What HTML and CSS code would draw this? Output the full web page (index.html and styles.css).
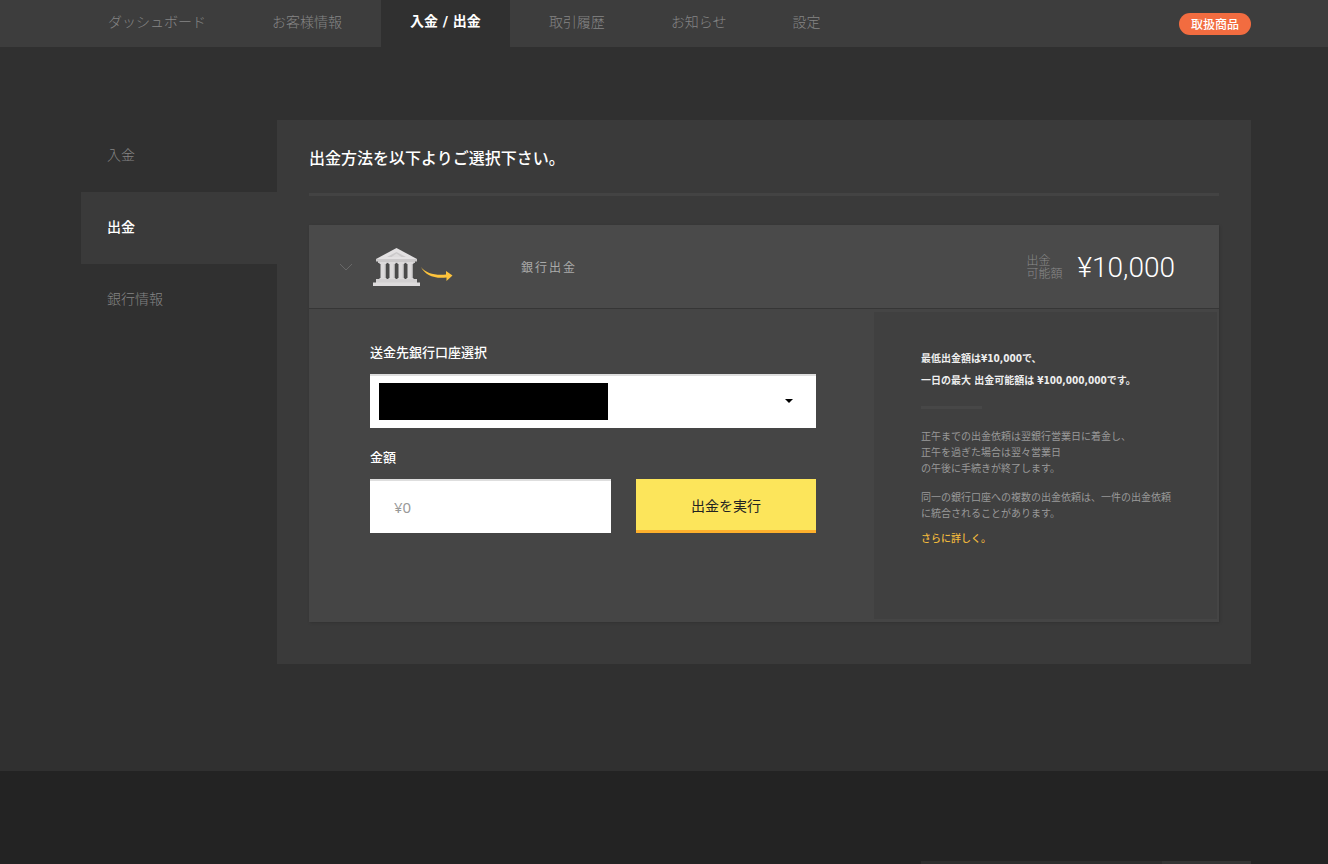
FILE: index.html
```html
<!DOCTYPE html>
<html lang="ja">
<head>
<meta charset="utf-8">
<meta name="viewport" content="width=device-width, initial-scale=1">
<title>入金 / 出金</title>
<link rel="stylesheet" href="styles.css">
</head>
<body>
<header class="topbar">
  <nav class="topnav">
    <a class="topnav-item" href="#">ダッシュボード</a>
    <a class="topnav-item" href="#">お客様情報</a>
    <a class="topnav-item is-active" href="#">入金 / 出金</a>
    <a class="topnav-item" href="#">取引履歴</a>
    <a class="topnav-item" href="#">お知らせ</a>
    <a class="topnav-item" href="#">設定</a>
  </nav>
  <a class="pill" href="#">取扱商品</a>
</header>

<main class="main">
  <nav class="sidebar">
    <a class="side-item" href="#">入金</a>
    <a class="side-item is-active" href="#">出金</a>
    <a class="side-item" href="#">銀行情報</a>
  </nav>

  <section class="panel">
    <h1 class="panel-title">出金方法を以下よりご選択下さい。</h1>

    <article class="card">
      <header class="card-head">
        <svg class="chevron" width="14" height="8" viewBox="0 0 14 8" aria-hidden="true"><path d="M1 1l6 6 6-6" fill="none" stroke="#686868"/></svg>
        <svg class="bank" width="80" height="40" viewBox="0 0 80 40" aria-hidden="true">
          <path d="M23.500 1L44 12H3z" fill="#e3e1e2"/>
          <path d="M23.500 5L33 10H14z" fill="#cbc9ca"/>
          <path d="M23.500 6.500l5 3.500h-10z" fill="#dedcdd"/>
          <path d="M3 12h41v2.500h-2V16H5v-1.500H3z" fill="#cbc9ca"/>
          <path d="M6.500 15h7v2h-1v14h1v1.500h-7V31h1V17h-1zM15.500 15h7v2h-1v14h1v1.500h-7V31h1V17h-1zM24.500 15h7v2h-1v14h1v1.500h-7V31h1V17h-1zM33.500 15h7v2h-1v14h1v1.500h-7V31h1V17h-1z" fill="#dcdadb"/>
          <path d="M11.500 17h1v14h-1zM20.500 17h1v14h-1zM29.500 17h1v14h-1zM38.500 17h1v14h-1z" fill="#cac8c9"/>
          <path d="M3 32h41v4H3z" fill="#d2d0d1"/>
          <path d="M0 35.500h47V39H0z" fill="#dddbdc"/>
          <path d="M48 20c5 6.500 14 8.500 25 7.500V24l6.500 4.500L73.500 34v-3.500C61 32 52 28 48 20z" fill="#fdc33c"/>
        </svg>
        <h2 class="card-title">銀行出金</h2>
        <div class="limit">
          <span class="limit-label">出金<br>可能額</span>
          <strong class="limit-value">¥10,000</strong>
        </div>
      </header>

      <div class="card-body">
        <form class="form">
          <label class="label" for="bank">送金先銀行口座選択</label>
          <div class="select-wrap">
            <select class="field select" id="bank"><option></option></select>
            <span class="mask"></span>
            <svg class="caret" width="8" height="4" viewBox="0 0 8 4" aria-hidden="true"><path d="M0 0h8L4 4z"/></svg>
          </div>
          <label class="label label-amount" for="amount">金額</label>
          <div class="row">
            <input class="field amount" id="amount" type="text" placeholder="¥0">
            <button class="submit" type="submit">出金を実行</button>
          </div>
        </form>

        <aside class="notes">
          <p class="notes-strong">最低出金額は¥10,000で、<br>一日の最大 出金可能額は ¥100,000,000です。</p>
          <hr class="notes-rule">
          <p class="notes-text">正午までの出金依頼は翌銀行営業日に着金し、<br>正午を過ぎた場合は翌々営業日<br>の午後に手続きが終了します。</p>
          <p class="notes-text">同一の銀行口座への複数の出金依頼は、一件の出金依頼<br>に統合されることがあります。</p>
          <a class="notes-link" href="#">さらに詳しく。</a>
        </aside>
      </div>
    </article>
  </section>
</main>

<footer class="footer">
  <div class="footer-bar"><span class="footer-bar-end"></span></div>
</footer>
</body>
</html>
```
FILE: styles.css
```css
* {
  box-sizing: border-box;
}

body {
  margin: 0;
  background: #232323;
  color: #fff;
  font-family: "Noto Sans CJK JP", sans-serif;
  font-size: 14px;
}

a {
  text-decoration: none;
}

h1, h2, p {
  margin: 0;
}

/* Top navigation */
.topbar {
  display: flex;
  justify-content: space-between;
  align-items: flex-start;
  padding: 0 77px 0 81px;
  background: #3d3d3d;
}

.topnav {
  display: flex;
  gap: 12px;
}

.topnav-item {
  padding: 0 27px 5px;
  line-height: 42px;
  font-weight: 300;
  color: #858585;
  white-space: nowrap;
}

.topnav-item.is-active {
  padding: 0 29px 5px;
  background: #303030;
  color: #fff;
  font-family: "DejaVu Sans", "Noto Sans CJK JP", sans-serif;
  font-weight: 700;
}

.pill {
  margin-top: 13px;
  padding: 0 12px 1px;
  border-radius: 11px;
  background: #f26c40;
  color: #fff;
  font-size: 12px;
  font-weight: 500;
  line-height: 21px;
}

/* Page body */
.main {
  display: flex;
  align-items: flex-start;
  padding: 73px 77px 107px 81px;
  background: #303030;
}

.sidebar {
  display: flex;
  flex-direction: column;
  flex: 0 0 196px;
}

.side-item {
  padding: 0 26px 4px;
  line-height: 68px;
  font-weight: 300;
  color: #858585;
}

.side-item.is-active {
  background: #3a3a3a;
  color: #fff;
  font-weight: 500;
}

.panel {
  flex: 1;
  padding: 26px 32px 42px;
  background: #3a3a3a;
}

.panel-title {
  padding-bottom: 25px;
  border-bottom: 3px solid #434343;
  font-size: 16px;
  font-weight: 500;
  line-height: 22px;
}

/* Withdrawal method card */
.card {
  margin-top: 29px;
  background: #454545;
  box-shadow: 1px 1px 2px #333;
}

.card-head {
  display: flex;
  align-items: center;
  height: 84px;
  padding: 0 44px 0 30px;
  border-bottom: 1px solid #363636;
  background: #4a4a4a;
}

.bank {
  margin-left: 20px;
}

.card-title {
  margin-left: 68px;
  color: #aaa;
  font-size: 12px;
  font-weight: 400;
  letter-spacing: 2px;
}

.limit {
  display: flex;
  align-items: center;
  gap: 15px;
  margin-left: auto;
  padding-top: 2px;
}

.limit-label {
  padding-bottom: 4px;
  color: #8a8a8a;
  font-size: 12px;
  font-weight: 300;
  line-height: 13px;
}

.limit-value {
  font-family: Roboto, sans-serif;
  font-size: 28px;
  font-weight: 300;
}

.card-body {
  display: flex;
}

.form {
  flex: 1;
  padding: 33px 58px 33px 61px;
}

.label {
  display: block;
  margin-bottom: 12px;
  font-size: 13px;
  font-weight: 500;
  line-height: 20px;
}

.label-amount {
  margin-top: 19px;
}

.field {
  display: block;
  width: 100%;
  height: 54px;
  padding: 0 24px;
  border: 0;
  border-top: 2px solid #dedede;
  border-radius: 0;
  background: #fff;
  color: #222;
  font-family: "Noto Sans", "Noto Sans CJK JP", sans-serif;
  font-size: 15px;
}

.select-wrap {
  position: relative;
}

.select {
  appearance: none;
}

.mask {
  position: absolute;
  top: 9px;
  left: 9px;
  width: 229px;
  height: 37px;
  background: #000;
  pointer-events: none;
}

.caret {
  position: absolute;
  top: 25px;
  right: 23px;
  pointer-events: none;
}

.row {
  display: grid;
  grid-template-columns: 241fr 180fr;
  gap: 25px;
}

.amount {
  min-width: 0;
}

.amount::placeholder {
  color: #999;
}

.submit {
  border: 0;
  border-bottom: 3px solid #fdb02c;
  background: #fce55b;
  color: #222;
  font-family: "Noto Sans CJK JP", sans-serif;
  font-size: 14px;
}

.notes {
  flex: 0 0 343px;
  margin: 3px 2px 3px 0;
  padding: 36px 24px 73px 47px;
  background: #404040;
  font-size: 10px;
}

.notes-strong {
  color: #eee;
  font-family: "DejaVu Sans Condensed", "Noto Sans CJK JP", sans-serif;
  font-weight: 700;
  line-height: 22px;
}

.notes-rule {
  width: 61px;
  height: 3px;
  margin: 14px 0 19px;
  border: 0;
  background: #474747;
}

.notes-text {
  margin-bottom: 13px;
  color: #999;
  line-height: 16px;
}

.notes-text:last-of-type {
  margin-bottom: 9px;
}

.notes-link {
  display: block;
  color: #f0b93c;
  font-weight: 500;
  line-height: 16px;
}

/* Footer */
.footer {
  padding: 90px 77px 0 81px;
}

.footer-bar {
  display: flex;
  justify-content: flex-end;
  width: 330px;
  height: 3px;
  margin-left: auto;
  background: #2d2d2d;
}

.footer-bar-end {
  width: 89px;
  background: #343434;
}
```
